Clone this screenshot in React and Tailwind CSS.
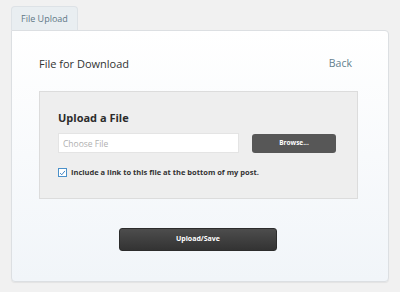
export default function App() {
  return (
    <div className="w-[400px] h-[292px] bg-[#f1f1f1] px-[11px] pt-[6px] font-['Open_Sans',sans-serif] text-[#333]">
      <div className="flex">
        <div className="h-[24px] px-[9px] flex items-center rounded-t-[4px] border border-b-0 border-[#dde2e6] bg-[#e9eef1] text-[9px] text-[#5f7886]">
          File Upload
        </div>
      </div>
      <div className="h-[252px] rounded-b-[4px] rounded-tr-[4px] border border-[#dcdfe2] bg-gradient-to-b from-white to-[#f1f5f9] shadow-[0_1px_1px_rgba(0,0,0,0.06)] px-[27px] pt-[25px]">
        <div className="flex items-center justify-between pr-[7px]">
          <h2 className="text-[11px] text-[#333]">File for Download</h2>
          <a className="text-[10.5px] text-[#64808e] pr-[2px]">Back</a>
        </div>
        <div className="mt-[18px] w-[319px] h-[108px] bg-[#eeeeee] border border-[#dcdcdc] px-[18px] pt-[18px]">
          <div className="text-[11px] font-bold text-[#2b2b2b]">Upload a File</div>
          <div className="mt-[7px] flex items-center">
            <input
              type="text"
              placeholder="Choose File"
              className="w-[181px] h-[20px] bg-white border border-[#e4e4e4] px-[4px] text-[8.5px] placeholder:text-[#b0b0b0] outline-none"
            />
            <button className="ml-[13px] w-[84px] h-[19px] rounded-[3px] bg-[#575757] text-white text-[6.5px] font-bold">
              Browse...
            </button>
          </div>
          <label className="mt-[14px] flex items-center gap-[4px] text-[7.5px] font-bold text-[#333]">
            <span className="w-[9px] h-[9px] border border-[#4a90c9] bg-white flex items-center justify-center">
              <svg viewBox="0 0 10 10" className="w-[8px] h-[8px]">
                <path d="M1.5 5.2 L4 7.5 L8.5 2" fill="none" stroke="#3b82c4" strokeWidth="1.4" />
              </svg>
            </span>
            Include a link to this file at the bottom of my post.
          </label>
        </div>
        <div className="mt-[29px] flex justify-center pr-[4px]">
          <button className="w-[158px] h-[23px] rounded-[3px] bg-gradient-to-b from-[#4d4d4d] to-[#333333] border border-[#2c2c2c] text-white text-[7px] font-bold">
            Upload/Save
          </button>
        </div>
      </div>
    </div>
  );
}
